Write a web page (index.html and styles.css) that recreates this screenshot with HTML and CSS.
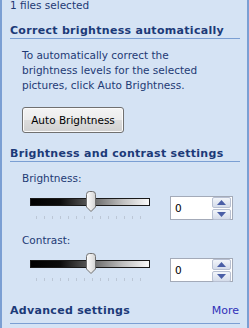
FILE: index.html
```html
<!DOCTYPE html>
<html lang="en">
<head>
  <meta charset="UTF-8" />
  <title>Brightness</title>
  <link rel="stylesheet" href="styles.css">
</head>
<body>
  <div class="panel">
    <div class="status">1 files selected</div>

    <h2 class="section-title">Correct brightness automatically</h2>
    <p class="note">To automatically correct the brightness levels for the selected pictures, click Auto Brightness.</p>
    <button class="btn" type="button">Auto Brightness</button>

    <h2 class="section-title">Brightness and contrast settings</h2>

    <div class="field">
      <div class="field-label">Brightness:</div>
      <div class="slider-row">
        <div class="slider">
          <div class="track"></div>
          <svg class="thumb" width="12" height="22" viewBox="0 0 12 22">
            <defs>
              <linearGradient id="tg1" x1="0" y1="0" x2="1" y2="0">
                <stop offset="0" stop-color="#ffffff"/>
                <stop offset="1" stop-color="#d4d4d4"/>
              </linearGradient>
            </defs>
            <path d="M1.5 3.5 Q1.5 0.5 4.5 0.5 H7.5 Q10.5 0.5 10.5 3.5 V16 L6 20.5 L1.5 16 Z" fill="url(#tg1)" stroke="#6f6f6f"/>
          </svg>
          <div class="ticks"></div>
        </div>
        <div class="spin">
          <span class="spin-value">0</span>
          <div class="spin-btns">
            <div class="spin-btn"><svg width="9" height="5" viewBox="0 0 9 5"><path d="M4.5 0 L9 5 H0 Z" fill="#4a5ea6"/></svg></div>
            <div class="spin-btn"><svg width="9" height="5" viewBox="0 0 9 5"><path d="M0 0 H9 L4.5 5 Z" fill="#4a5ea6"/></svg></div>
          </div>
        </div>
      </div>
    </div>

    <div class="field">
      <div class="field-label">Contrast:</div>
      <div class="slider-row">
        <div class="slider">
          <div class="track"></div>
          <svg class="thumb" width="12" height="22" viewBox="0 0 12 22">
            <defs>
              <linearGradient id="tg2" x1="0" y1="0" x2="1" y2="0">
                <stop offset="0" stop-color="#ffffff"/>
                <stop offset="1" stop-color="#d4d4d4"/>
              </linearGradient>
            </defs>
            <path d="M1.5 3.5 Q1.5 0.5 4.5 0.5 H7.5 Q10.5 0.5 10.5 3.5 V16 L6 20.5 L1.5 16 Z" fill="url(#tg2)" stroke="#6f6f6f"/>
          </svg>
          <div class="ticks"></div>
        </div>
        <div class="spin">
          <span class="spin-value">0</span>
          <div class="spin-btns">
            <div class="spin-btn"><svg width="9" height="5" viewBox="0 0 9 5"><path d="M4.5 0 L9 5 H0 Z" fill="#4a5ea6"/></svg></div>
            <div class="spin-btn"><svg width="9" height="5" viewBox="0 0 9 5"><path d="M0 0 H9 L4.5 5 Z" fill="#4a5ea6"/></svg></div>
          </div>
        </div>
      </div>
    </div>

    <h2 class="section-title advanced">
      <span>Advanced settings</span>
      <a class="more" href="#">More</a>
    </h2>
  </div>
</body>
</html>
```

FILE: styles.css
```css
html, body {
  margin: 0;
  padding: 0;
}
body {
  font-family: "DejaVu Sans", sans-serif;
  font-size: 10.5px;
  line-height: 15px;
  color: #1e3a74;
  background: #d5e3f4;
  overflow: hidden;
}
.panel {
  height: 328px;
  box-sizing: border-box;
  border-left: 2px solid #7b9fd3;
  border-right: 2px solid #7b9fd3;
  background: #d5e3f4;
  overflow: hidden;
}
.status {
  margin-top: -2px;
  padding-left: 8px;
}
.section-title {
  margin: 10px 7px 0 8px;
  font-size: 11px;
  line-height: 15px;
  font-weight: bold;
  letter-spacing: 0.3px;
  color: #1c3a78;
  border-bottom: 1px solid #7b9fd3;
}
.note {
  margin: 9px 25px 0 20px;
}
.btn {
  display: block;
  margin: 14px 0 0 20px;
  width: 102px;
  height: 26px;
  padding: 0;
  font: inherit;
  color: #000;
  border: 1px solid #707070;
  border-radius: 3px;
  background: linear-gradient(to bottom, #f4f4f4 0%, #ececec 48%, #dcdcdc 52%, #d0d0d0 100%);
  box-shadow: inset 0 0 0 1px #fbfbfb;
}
.btn + .section-title {
  margin-top: 13px;
}
.field {
  padding-left: 20px;
}
.field-label {
  margin-top: 9px;
}
.field + .field .field-label {
  margin-top: 13px;
}
.slider-row {
  display: flex;
  align-items: flex-start;
  margin-top: 5px;
}
.slider {
  position: relative;
  width: 120px;
  height: 29px;
  margin-left: 8px;
}
.track {
  margin-top: 7px;
  height: 8px;
  box-sizing: border-box;
  border: 1px solid #1a1a1a;
  background: linear-gradient(to right, #000 0%, #0c0c0c 25%, #5e5e5e 50%, #c0c0c0 78%, #fafafa 100%);
}
.thumb {
  position: absolute;
  left: 55px;
  top: 0;
}
.ticks {
  margin: 10px 0 0 6px;
  width: 107px;
  height: 3px;
  background: repeating-linear-gradient(to right, #bcc7d6 0, #bcc7d6 1px, transparent 1px, transparent 8px);
}
.spin {
  display: flex;
  align-items: center;
  justify-content: space-between;
  box-sizing: border-box;
  width: 63px;
  height: 24px;
  margin: 5px 0 0 20px;
  padding: 0 1px 0 4px;
  background: #fff;
  border: 1px solid #a3aab8;
}
.spin-value {
  color: #000;
}
.spin-btns {
  display: flex;
  flex-direction: column;
  gap: 1px;
}
.spin-btn {
  display: flex;
  align-items: center;
  justify-content: center;
  width: 17px;
  height: 9px;
  border: 1px solid #b8c0d2;
  border-radius: 2px;
  background: linear-gradient(to bottom, #f2f5fa, #d5dcea);
}
.advanced {
  display: flex;
  justify-content: space-between;
  margin-top: 21px;
  padding-bottom: 5px;
}
.more {
  font-weight: normal;
  letter-spacing: 0;
  color: #3030b8;
  text-decoration: none;
  padding-right: 1px;
}
```
